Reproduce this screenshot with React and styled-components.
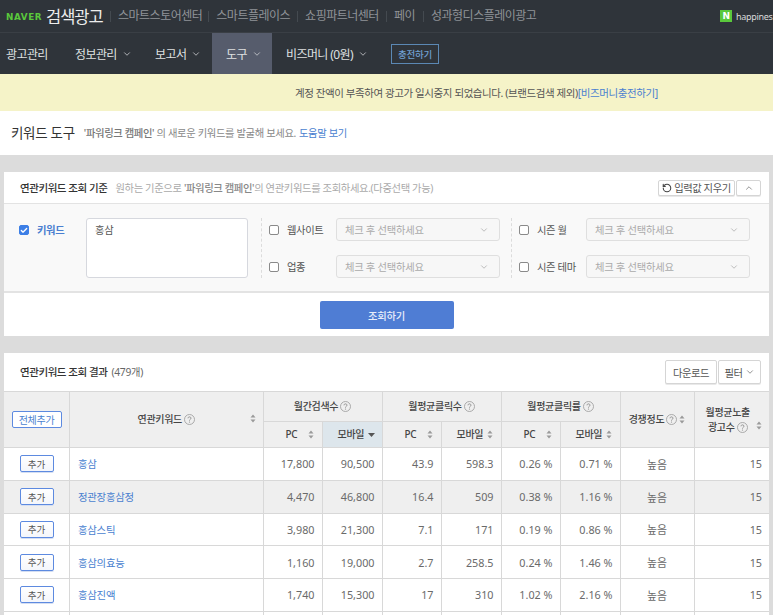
import React from "react";
import styled, { createGlobalStyle } from "styled-components";
import { ChevronDown, ChevronUp, RotateCcw, Check } from "lucide-react";

const FONT = `"Noto Sans", "Noto Sans CJK KR", sans-serif`;

const Global = createGlobalStyle`
  html, body { margin: 0; padding: 0; height: 100%; overflow: hidden; background: #dcdcdc; }
  body { font-family: ${FONT}; font-size: 11px; color: #555; -webkit-font-smoothing: antialiased; }
  * { box-sizing: border-box; }
`;

const Page = styled.div`width: 773px; height: 615px; overflow: hidden; background: #dcdcdc;`;

const TopBar = styled.header`
  height: 33px; background: #2f343a; border-bottom: 1px solid #3a3f45;
  display: flex; align-items: center; padding-left: 6px; white-space: nowrap; overflow: hidden;
`;
const Naver = styled.span`
  font-family: "DejaVu Sans", sans-serif; font-weight: 700; font-size: 8.8px; color: #5ac83c;
  width: 40px; flex: none; letter-spacing: 0.6px; margin-top: 1px;
`;
const Brand = styled.span`
  color: #eceded; font-size: 16.5px; width: 64px; flex: none; letter-spacing: -1px; font-weight: 400;
`;
const TopLink = styled.a`
  color: #8f9398; font-size: 12px; letter-spacing: -0.5px; display: flex; align-items: center; line-height: 1;
  &::before { content: ""; width: 1px; height: 11px; background: #444a50; margin-right: 7px; }
  margin-right: ${(p) => p.$gap}px;
`;
const Account = styled.div`
  margin-left: auto; display: flex; align-items: center; gap: 4px; width: 53px; flex: none;
  color: #d9dadb; font-size: 9px; letter-spacing: -0.3px;
`;
const NMark = styled.span`
  width: 12px; height: 12px; background: #5ac83c; color: #fff; font-size: 9px; font-weight: 800;
  display: flex; align-items: center; justify-content: center; flex: none;
  font-family: "DejaVu Sans", sans-serif;
`;

const Nav = styled.nav`
  height: 41px; background: #2f343a; display: flex; align-items: stretch; padding-left: 6px; white-space: nowrap;
`;
const NavItem = styled.a`
  display: flex; align-items: center; color: #dfe0e1; font-size: 12px; letter-spacing: -0.6px; gap: 5px;
  width: ${(p) => p.$w}px; flex: none;
  padding-left: ${(p) => p.$pl || 0}px;
  background: ${(p) => (p.$active ? "#565c6c" : "transparent")};
  svg { color: #d8dadc; }
`;
const Charge = styled.button`
  align-self: center; width: 48px; height: 20px; padding: 0; background: transparent;
  border: 1px solid #5b88b4; color: #6f9fd0; font: 500 9.5px ${FONT}; letter-spacing: -0.3px; margin-left: 5px;
`;

const Notice = styled.div`
  height: 37px; background: #f5f3c8; display: flex; align-items: center; padding-left: 295px;
  color: #555; font-size: 10.5px; letter-spacing: -0.42px; white-space: nowrap;
`;
const Link = styled.a`color: ${(p) => p.$c || "#4a7fd0"};`;

const PageHead = styled.div`
  height: 44px; background: #fff; display: flex; align-items: center; padding: 0 0 3px 11px; white-space: nowrap;
`;
const PageTitle = styled.h1`
  margin: 0 9px 0 0; font-size: 13.5px; font-weight: 400; color: #333; letter-spacing: -0.3px;
`;
const PageDesc = styled.span`
  font-size: 10.3px; color: #888; letter-spacing: -0.35px; margin-top: 1px;
  b { font-weight: 500; color: #777; }
  a { margin-left: 3px; }
`;

const Panel = styled.section`
  width: 765px; margin: ${(p) => p.$top}px 0 0 4px; background: #fff;
`;
const PanelHead = styled.div`
  height: ${(p) => p.$h}px; display: flex; align-items: center; padding: 0 8px 0 16px; white-space: nowrap;
`;
const PanelTitle = styled.h2`
  margin: 0; font-size: 10.5px; font-weight: 500; color: #333; letter-spacing: -0.45px;
  padding-bottom: 1px;
`;
const PanelDesc = styled.span`
  margin-left: 8px; font-size: 10.3px; color: #aaa; letter-spacing: -0.36px; padding-bottom: 1px;
  b { color: #888; font-weight: 500; }
`;
const Count = styled.span`margin-left: 4px; font-size: 10.3px; color: #666; letter-spacing: -0.3px; padding-bottom: 1px;`;
const HeadTools = styled.div`margin-left: auto; display: flex; gap: 1px;`;
const ToolBtn = styled.button`
  height: ${(p) => p.$h}px; width: ${(p) => p.$w}px; padding: 0; background: #fff;
  border: 1px solid #d5d5d5; border-radius: 2px; color: #555; font: 400 10.3px ${FONT}; letter-spacing: -0.45px;
  display: flex; align-items: center; justify-content: center; gap: 2px;
  box-shadow: 0 1px 0 #e9e9e9;
`;

const Filters = styled.div`
  height: 90px; background: #f9f9f9; border-top: 1px solid #e3e3e3; border-bottom: 2px solid #e3e3e3;
  display: flex; padding-top: 14px;
`;
const KeywordCol = styled.div`
  width: 258px; flex: none; height: 60px; display: flex; padding-left: 15px; border-right: 1px dashed #dcdcdc;
`;
const KeywordLabel = styled.label`
  display: flex; align-items: flex-start; gap: 8px; width: 67px; flex: none; padding-top: 6px;
  color: #4a7fd0; font-weight: 700; font-size: 10.3px; letter-spacing: -0.4px; line-height: 12px;
`;
const KeywordBox = styled.div`
  width: 162px; height: 60px; background: #fff; border: 1px solid #d6d8de; border-radius: 3px;
  padding: 3px 8px; font-size: 10.3px; color: #555; letter-spacing: -0.2px;
`;
const FilterCol = styled.div`
  width: ${(p) => p.$w}px; flex: none; height: 60px; padding-left: 7px;
  display: flex; flex-direction: column; justify-content: space-between;
  border-right: ${(p) => (p.$last ? "none" : "1px dashed #dcdcdc")};
`;
const FilterRow = styled.div`display: flex; align-items: center; height: 23px;`;
const FilterLabel = styled.label`
  display: flex; align-items: center; gap: 8px; width: ${(p) => p.$w}px; flex: none;
  color: #555; font-size: 10.3px; letter-spacing: -0.35px; white-space: nowrap;
`;
const CheckBox = styled.span`
  width: 10px; height: 10px; border-radius: 2px; flex: none; display: flex; align-items: center; justify-content: center;
  border: 1px solid ${(p) => (p.$on ? "#3d7fe6" : "#8a8a8a")};
  background: ${(p) => (p.$on ? "#3d7fe6" : "#fff")}; color: #fff; margin-top: ${(p) => (p.$on ? 1 : 0)}px;
`;
const Select = styled.div`
  width: 164px; height: 23px; background: #f7f7f7; border: 1px solid #dfdfdf; border-radius: 3px;
  display: flex; align-items: center; justify-content: space-between; padding: 0 10px 0 8px;
  color: #aaa; font-size: 10.3px; letter-spacing: -0.25px; white-space: nowrap;
  svg { color: #999; }
`;
const SubmitRow = styled.div`height: 43px; display: flex; justify-content: center; padding: 8px 0 0 0;`;
const Submit = styled.button`
  width: 134px; height: 28px; background: #4f7dd4; border: none; border-radius: 2px;
  color: #e8eefa; font: 500 10.3px ${FONT}; letter-spacing: -0.2px;
`;

const Table = styled.table`
  width: 765px; table-layout: fixed; border-collapse: collapse; font-size: 10.8px;
`;
const Th = styled.th`
  background: ${(p) => (p.$sorted ? "#dde6ec" : "#efefef")}; border: 1px solid #d8d8d8; border-left-width: 1px;
  font-weight: 500; color: #444; font-size: 10px; letter-spacing: -0.3px; padding: 0; line-height: 15px;
  position: relative; height: ${(p) => p.$h || 30}px;
  &:first-child { border-left: none; }
  &:last-child { border-right: none; }
`;
const ThInner = styled.span`
  display: flex; align-items: center; justify-content: ${(p) => p.$j || "center"}; gap: ${(p) => p.$gap ?? 2}px;
  padding: ${(p) => p.$pad || 0};
`;
const SortAt = styled.span`
  position: absolute; right: ${(p) => p.$r}px; top: ${(p) => p.$t}px; line-height: 0; color: #999;
`;
const Tr = styled.tr`background: ${(p) => (p.$alt ? "#efefef" : "#fff")};`;
const Td = styled.td`
  border: 1px solid #d8d8d8; height: 32.75px; padding: 0 ${(p) => p.$pr ?? 7}px 0 ${(p) => p.$pl ?? 0}px;
  text-align: ${(p) => p.$a || "right"}; color: #6a6a6a; font-size: 10.8px; white-space: nowrap;
  &:first-child { border-left: none; }
  &:last-child { border-right: none; }
`;
const AddAll = styled.button`
  width: 50px; height: 17px; padding: 0; background: #fff; border: 1px solid #5d8ae0; border-radius: 2px;
  color: #4a7fd0; font: 400 10px ${FONT}; letter-spacing: -0.3px;
`;
const Add = styled.button`
  width: 34px; height: 17px; padding: 0; background: linear-gradient(#fff, #f4f6fb); border: 1px solid #5d8ae0;
  border-radius: 2px; color: #555; font: 400 9.5px ${FONT}; box-shadow: 0 1px 0 #d4def2;
`;
const KeywordLink = styled.a`color: #4a7fd0; font-size: 10.4px; letter-spacing: -0.25px;`;

const QMark = () => (
  <svg width="11" height="11" viewBox="0 0 11 11" fill="none" style={{ flex: "none" }}>
    <circle cx="5.5" cy="5.5" r="5" stroke="#999" strokeWidth="0.8" />
    <path d="M4 4.3C4 3.4 4.7 2.9 5.5 2.9S7 3.4 7 4.2C7 5.3 5.5 5.2 5.5 6.6" stroke="#888" strokeWidth="0.9" />
    <circle cx="5.5" cy="8" r="0.6" fill="#888" />
  </svg>
);
const Sort = () => (
  <svg width="6" height="9" viewBox="0 0 6 9" fill="#9a9a9a" style={{ display: "block" }}>
    <path d="M3 0.5 5.5 3.5H.5zM3 8.5.5 5.5h5z" />
  </svg>
);
const SortDown = () => (
  <svg width="7" height="4" viewBox="0 0 7 4" fill="#555" style={{ display: "block" }}>
    <path d="M0 0h7L3.5 4z" />
  </svg>
);

const TOP = [
  ["스마트스토어센터", 6],
  ["스마트플레이스", 7],
  ["쇼핑파트너센터", 7],
  ["페이", 8],
  ["성과형디스플레이광고", 0],
];
const ROWS = [
  ["홍삼", "17,800", "90,500", "43.9", "598.3", "0.26 %", "0.71 %", "높음", "15"],
  ["정관장홍삼정", "4,470", "46,800", "16.4", "509", "0.38 %", "1.16 %", "높음", "15"],
  ["홍삼스틱", "3,980", "21,300", "7.1", "171", "0.19 %", "0.86 %", "높음", "15"],
  ["홍삼의효능", "1,160", "19,000", "2.7", "258.5", "0.24 %", "1.46 %", "높음", "15"],
  ["홍삼진액", "1,740", "15,300", "17", "310", "1.02 %", "2.16 %", "높음", "15"],
  ["", "", "", "", "", "", "", "", ""],
];
const WIDTHS = [65.5, 193.5, 59, 60, 59, 60, 59, 60, 74, 75];

const Chevron = () => <ChevronDown size={10} strokeWidth={1.8} />;

const Field = ({ label, w }) => (
  <FilterRow>
    <FilterLabel $w={w}>
      <CheckBox />
      {label}
    </FilterLabel>
    <Select>
      체크 후 선택하세요
      <ChevronDown size={10} strokeWidth={1.5} />
    </Select>
  </FilterRow>
);

const SubHead = ({ children, sorted, pad }) => (
  <Th $h={26} $sorted={sorted}>
    <ThInner $j="flex-start" $pad={`0 0 0 ${pad}px`}>{children}</ThInner>
    <SortAt $r={sorted ? 7 : 8} $t={sorted ? 11 : 8}>{sorted ? <SortDown /> : <Sort />}</SortAt>
  </Th>
);

export default function App() {
  return (
    <Page>
      <Global />
      <TopBar>
        <Naver>NAVER</Naver>
        <Brand>검색광고</Brand>
        {TOP.map(([t, g]) => (
          <TopLink key={t} $gap={g}>{t}</TopLink>
        ))}
        <Account>
          <NMark>N</NMark>
          happines
        </Account>
      </TopBar>
      <Nav>
        <NavItem $w={69}>광고관리</NavItem>
        <NavItem $w={80}>정보관리 <Chevron /></NavItem>
        <NavItem $w={57}>보고서 <Chevron /></NavItem>
        <NavItem $w={60} $pl={14} $active>도구 <Chevron /></NavItem>
        <NavItem $w={114} $pl={14}>비즈머니 (0원) <Chevron /></NavItem>
        <Charge>충전하기</Charge>
      </Nav>
      <Notice>
        계정 잔액이 부족하여 광고가 일시중지 되었습니다. (브랜드검색 제외)
        <Link>[비즈머니충전하기]</Link>
      </Notice>
      <PageHead>
        <PageTitle>키워드 도구</PageTitle>
        <PageDesc>
          <b>'파워링크 캠페인'</b> 의 새로운 키워드를 발굴해 보세요.
          <Link>도움말 보기</Link>
        </PageDesc>
      </PageHead>

      <Panel $top={17}>
        <PanelHead $h={31}>
          <PanelTitle>연관키워드 조회 기준</PanelTitle>
          <PanelDesc>
            원하는 기준으로 <b>'파워링크 캠페인'</b>의 연관키워드를 조회하세요.(다중선택 가능)
          </PanelDesc>
          <HeadTools>
            <ToolBtn $w={77} $h={16}>
              <RotateCcw size={10} strokeWidth={2.6} color="#444" />
              입력값 지우기
            </ToolBtn>
            <ToolBtn $w={25} $h={16}>
              <ChevronUp size={10} strokeWidth={1.5} />
            </ToolBtn>
          </HeadTools>
        </PanelHead>
        <Filters>
          <KeywordCol>
            <KeywordLabel>
              <CheckBox $on>
                <Check size={9} strokeWidth={4} />
              </CheckBox>
              키워드
            </KeywordLabel>
            <KeywordBox>홍삼</KeywordBox>
          </KeywordCol>
          <FilterCol $w={250}>
            <Field label="웹사이트" w={67} />
            <Field label="업종" w={67} />
          </FilterCol>
          <FilterCol $w={257} $last>
            <Field label="시즌 월" w={67} />
            <Field label="시즌 테마" w={67} />
          </FilterCol>
        </Filters>
        <SubmitRow>
          <Submit>조회하기</Submit>
        </SubmitRow>
      </Panel>

      <Panel $top={17}>
        <PanelHead $h={38}>
          <PanelTitle>연관키워드 조회 결과</PanelTitle>
          <Count>(479개)</Count>
          <HeadTools>
            <ToolBtn $w={52} $h={24}>다운로드</ToolBtn>
            <ToolBtn $w={43} $h={24}>
              필터 <ChevronDown size={10} strokeWidth={1.5} />
            </ToolBtn>
          </HeadTools>
        </PanelHead>
        <Table>
          <colgroup>
            {WIDTHS.map((w, i) => (
              <col key={i} width={w} />
            ))}
          </colgroup>
          <thead>
            <tr>
              <Th rowSpan={2}><AddAll>전체추가</AddAll></Th>
              <Th rowSpan={2}>
                <ThInner>연관키워드 <QMark /></ThInner>
                <SortAt $r={7} $t={22}><Sort /></SortAt>
              </Th>
              <Th colSpan={2}><ThInner>월간검색수 <QMark /></ThInner></Th>
              <Th colSpan={2}><ThInner>월평균클릭수 <QMark /></ThInner></Th>
              <Th colSpan={2}><ThInner>월평균클릭률 <QMark /></ThInner></Th>
              <Th rowSpan={2}>
                <ThInner $gap={2}>경쟁정도 <QMark /> <Sort /></ThInner>
              </Th>
              <Th rowSpan={2}>
                <ThInner $pad="0 8px 0 0">월평균노출</ThInner>
                <ThInner $gap={2} $pad="0 8px 0 0">광고수 <QMark /></ThInner>
                <SortAt $r={7} $t={29}><Sort /></SortAt>
              </Th>
            </tr>
            <tr>
              <SubHead pad={22}>PC</SubHead>
              <SubHead sorted pad={15}>모바일</SubHead>
              <SubHead pad={22}>PC</SubHead>
              <SubHead pad={15}>모바일</SubHead>
              <SubHead pad={22}>PC</SubHead>
              <SubHead pad={15}>모바일</SubHead>
            </tr>
          </thead>
          <tbody>
            {ROWS.map((r, i) => (
              <Tr key={i} $alt={i === 1}>
                <Td $a="center" $pr={0}>{r[0] && <Add>추가</Add>}</Td>
                <Td $a="left" $pl={8}><KeywordLink>{r[0]}</KeywordLink></Td>
                {r.slice(1, 7).map((v, j) => (
                  <Td key={j}>{v}</Td>
                ))}
                <Td $a="center" $pr={0}>{r[7]}</Td>
                <Td>{r[8]}</Td>
              </Tr>
            ))}
          </tbody>
        </Table>
      </Panel>
    </Page>
  );
}
